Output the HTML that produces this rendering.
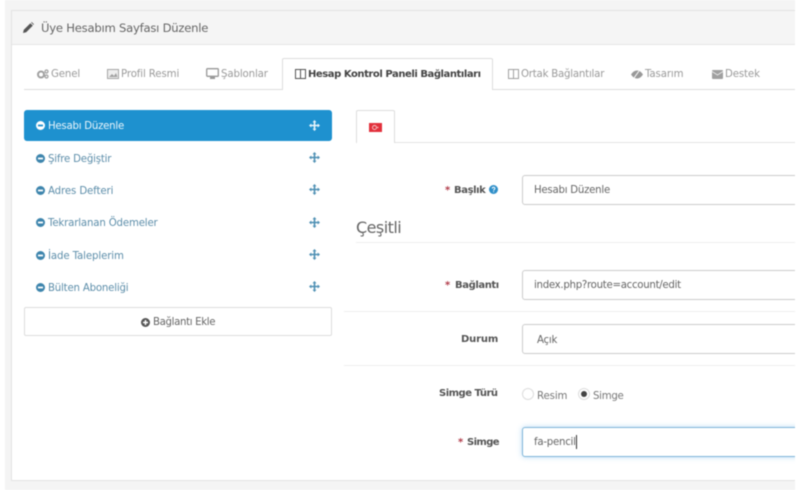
<!DOCTYPE html>
<html lang="tr"><head><meta charset="utf-8"><title>Üye Hesabım Sayfası Düzenle</title>
<style>
html,body{margin:0;padding:0;width:800px;height:490px;overflow:hidden;background:#fff}
#w{position:relative;width:800px;height:490px;overflow:hidden;background:#fff;font-family:"DejaVu Sans","Liberation Sans",sans-serif;filter:blur(.45px)}
#w div,#w span.t,#w svg{position:absolute}
.t{white-space:nowrap;line-height:16px;height:16px;font-size:10.2px;letter-spacing:-.12px}
.tab{color:#9a9a9a}
.l{color:#5d8eaa}
.b{font-weight:bold;color:#555;font-size:10px;letter-spacing:-.4px}
.r{color:#b03a48}
.in{left:522px;width:290px;height:28px;border:1px solid #ccc;border-radius:3px;background:#fff;box-sizing:content-box}
.v{color:#666;font-size:10.2px;letter-spacing:-.25px}
.hr{height:1px;background:#eee}
</style></head><body><div id="w">
<div style="left:5px;top:0;width:790px;height:490px;background:#f4f4f4"></div>
<div style="left:11px;top:10px;width:784px;height:469px;background:#fff;border:1px solid #e3e3e3;border-right:0;box-sizing:content-box"></div>
<div style="left:12px;top:11px;width:783px;height:33px;background:#f5f5f5;border-bottom:1px solid #e6e6e6"></div>
<svg style="left:23px;top:22px" width="11" height="11" viewBox="0 0 11 11"><path d="M0 11l.8-3.2L7.400 1.200 9.800 3.600 3.200 10.200zM8.100 .5l.6-.5 2.300 2.300-.6.6z" fill="#555"/></svg>
<span class="t" style="left:41px;top:20px;color:#666;font-size:11.6px;letter-spacing:-.23px">Üye Hesabım Sayfası Düzenle</span>

<div style="left:24px;top:89px;width:771px;height:1px;background:#ddd"></div>
<div style="left:282px;top:58px;width:211px;height:32px;background:#fff;border:1px solid #ddd;border-bottom:0;box-sizing:border-box;border-radius:2px 2px 0 0"></div>
<svg style="left:37px;top:69px" width="12" height="10" viewBox="0 0 12 10"><circle cx="4" cy="5.500" r="3" fill="none" stroke="#a0a0a0" stroke-width="2"/><circle cx="9.500" cy="2.500" r="1.500" fill="none" stroke="#a0a0a0" stroke-width="1.200"/><circle cx="9.500" cy="7.500" r="1.500" fill="none" stroke="#a0a0a0" stroke-width="1.200"/></svg>
<span class="t tab" style="left:51px;top:67px">Genel</span>
<svg style="left:107px;top:69px" width="12" height="10" viewBox="0 0 12 10"><rect x=".5" y=".5" width="11" height="9" fill="#eee" stroke="#a5a5a5"/><path d="M2 8l3-3 2 2 2-3 1.500 4z" fill="#a0a0a0"/></svg>
<span class="t tab" style="left:121px;top:67px">Profil Resmi</span>
<svg style="left:206px;top:68px" width="13" height="12" viewBox="0 0 13 12"><rect x=".7" y=".7" width="11.600" height="7.600" rx=".7" fill="#fff" stroke="#999" stroke-width="1.300"/><path d="M4 11h5V9H4z" fill="#999"/></svg>
<span class="t tab" style="left:221px;top:67px">Şablonlar</span>
<svg style="left:295px;top:69px" width="11" height="10" viewBox="0 0 11 10"><rect x=".5" y=".5" width="10" height="9" fill="none" stroke="#555"/><path d="M5.500 .5v9" stroke="#555"/></svg>
<span class="t" style="left:308px;top:67px;color:#444;font-weight:bold;font-size:10px;letter-spacing:-.44px">Hesap Kontrol Paneli Bağlantıları</span>
<svg style="left:508px;top:69px" width="11" height="10" viewBox="0 0 11 10"><rect x=".5" y=".5" width="10" height="9" fill="none" stroke="#a0a0a0"/><path d="M5.500 .5v9" stroke="#a0a0a0"/></svg>
<span class="t tab" style="left:521px;top:67px;letter-spacing:-.22px">Ortak Bağlantılar</span>
<svg style="left:631px;top:70px" width="12" height="9" viewBox="0 0 12 9"><path d="M0 4.500C2 1.500 4 .5 6 .5s4 1 6 4c-2 3-4 4-6 4s-4-1-6-4z" fill="#999"/><path d="M3 8L8 1" stroke="#fff"/></svg>
<span class="t tab" style="left:645px;top:67px">Tasarım</span>
<svg style="left:712px;top:70px" width="11" height="9" viewBox="0 0 11 9"><rect width="11" height="9" rx="1" fill="#a0a0a0"/><path d="M0 1.500l5.500 3.500L11 1.500" fill="none" stroke="#eee" stroke-width=".8"/></svg>
<span class="t tab" style="left:725px;top:67px">Destek</span>

<div style="left:24px;top:110px;width:308px;height:31px;background:#1e91cf;border-radius:3px"></div>
<svg style="left:36px;top:121px" width="9" height="9" viewBox="0 0 9 9"><circle cx="4.500" cy="4.500" r="4.500" fill="#fff"/><rect x="2" y="3.600" width="5" height="1.800" fill="#1e91cf"/></svg>
<span class="t" style="left:48px;top:119px;color:#eaf5fb;letter-spacing:-.25px">Hesabı Düzenle</span>
<svg style="left:309px;top:120px" width="11" height="11" viewBox="0 0 11 11"><path d="M5.500 0L7.500 2.300H6.300V4.700H8.700V3.500L11 5.500 8.700 7.500V6.300H6.300V8.700H7.500L5.500 11 3.500 8.700H4.700V6.300H2.300V7.500L0 5.500 2.300 3.500V4.700H4.700V2.300H3.500z" fill="#eaf5fb"/></svg>

<svg style="left:36px;top:154px" width="9" height="9" viewBox="0 0 9 9"><circle cx="4.500" cy="4.500" r="4.500" fill="#3e85ad"/><rect x="2" y="3.600" width="5" height="1.800" fill="#fff"/></svg>
<span class="t l" style="left:48px;top:152px;letter-spacing:-.2px">Şifre Değiştir</span>
<svg style="left:309px;top:152px" width="11" height="11" viewBox="0 0 11 11"><path d="M5.500 0L7.500 2.300H6.300V4.700H8.700V3.500L11 5.500 8.700 7.500V6.300H6.300V8.700H7.500L5.500 11 3.500 8.700H4.700V6.300H2.300V7.500L0 5.500 2.300 3.500V4.700H4.700V2.300H3.500z" fill="#4d8fb3"/></svg>

<svg style="left:36px;top:186px" width="9" height="9" viewBox="0 0 9 9"><circle cx="4.500" cy="4.500" r="4.500" fill="#3e85ad"/><rect x="2" y="3.600" width="5" height="1.800" fill="#fff"/></svg>
<span class="t l" style="left:48px;top:184px">Adres Defteri</span>
<svg style="left:309px;top:184px" width="11" height="11" viewBox="0 0 11 11"><path d="M5.500 0L7.500 2.300H6.300V4.700H8.700V3.500L11 5.500 8.700 7.500V6.300H6.300V8.700H7.500L5.500 11 3.500 8.700H4.700V6.300H2.300V7.500L0 5.500 2.300 3.500V4.700H4.700V2.300H3.500z" fill="#4d8fb3"/></svg>

<svg style="left:36px;top:218px" width="9" height="9" viewBox="0 0 9 9"><circle cx="4.500" cy="4.500" r="4.500" fill="#3e85ad"/><rect x="2" y="3.600" width="5" height="1.800" fill="#fff"/></svg>
<span class="t l" style="left:48px;top:216px;letter-spacing:-.17px">Tekrarlanan Ödemeler</span>
<svg style="left:309px;top:217px" width="11" height="11" viewBox="0 0 11 11"><path d="M5.500 0L7.500 2.300H6.300V4.700H8.700V3.500L11 5.500 8.700 7.500V6.300H6.300V8.700H7.500L5.500 11 3.500 8.700H4.700V6.300H2.300V7.500L0 5.500 2.300 3.500V4.700H4.700V2.300H3.500z" fill="#4d8fb3"/></svg>

<svg style="left:36px;top:251px" width="9" height="9" viewBox="0 0 9 9"><circle cx="4.500" cy="4.500" r="4.500" fill="#3e85ad"/><rect x="2" y="3.600" width="5" height="1.800" fill="#fff"/></svg>
<span class="t l" style="left:48px;top:249px">İade Taleplerim</span>
<svg style="left:309px;top:249px" width="11" height="11" viewBox="0 0 11 11"><path d="M5.500 0L7.500 2.300H6.300V4.700H8.700V3.500L11 5.500 8.700 7.500V6.300H6.300V8.700H7.500L5.500 11 3.500 8.700H4.700V6.300H2.300V7.500L0 5.500 2.300 3.500V4.700H4.700V2.300H3.500z" fill="#4d8fb3"/></svg>

<svg style="left:36px;top:283px" width="9" height="9" viewBox="0 0 9 9"><circle cx="4.500" cy="4.500" r="4.500" fill="#3e85ad"/><rect x="2" y="3.600" width="5" height="1.800" fill="#fff"/></svg>
<span class="t l" style="left:48px;top:281px;letter-spacing:-.2px">Bülten Aboneliği</span>
<svg style="left:309px;top:281px" width="11" height="11" viewBox="0 0 11 11"><path d="M5.500 0L7.500 2.300H6.300V4.700H8.700V3.500L11 5.500 8.700 7.500V6.300H6.300V8.700H7.500L5.500 11 3.500 8.700H4.700V6.300H2.300V7.500L0 5.500 2.300 3.500V4.700H4.700V2.300H3.500z" fill="#4d8fb3"/></svg>

<div style="left:24px;top:307px;width:308px;height:29px;border:1px solid #ddd;box-sizing:border-box;border-radius:2px"></div>
<svg style="left:141px;top:318px" width="9" height="9" viewBox="0 0 9 9"><circle cx="4.500" cy="4.500" r="4.500" fill="#555"/><path d="M2 4.500h5M4.500 2v5" stroke="#fff" stroke-width="1.500"/></svg>
<span class="t" style="left:153px;top:315px;color:#666;letter-spacing:-.35px">Bağlantı Ekle</span>

<div style="left:356px;top:142px;width:439px;height:1px;background:#e3e3e3"></div>
<div style="left:356px;top:110px;width:39px;height:33px;background:#fff;border:1px solid #ddd;border-bottom:0;box-sizing:border-box;border-radius:2px 2px 0 0"></div>
<svg style="left:369px;top:123px" width="13" height="9" viewBox="0 0 13 9"><rect width="13" height="9" fill="#e2303c"/><circle cx="5.500" cy="4.500" r="2" fill="none" stroke="#f5c8c8" stroke-width=".9"/><circle cx="8.800" cy="4.500" r=".7" fill="#f5c8c8"/></svg>

<span class="t r" style="left:445px;top:183px;font-weight:bold;font-size:10px">*</span>
<span class="t b" style="left:454px;top:183px">Başlık</span>
<svg style="left:489px;top:185px" width="9" height="9" viewBox="0 0 9 9"><circle cx="4.500" cy="4.500" r="4.500" fill="#2f8fc9"/><path d="M3.200 3.500c0-1.700 2.700-1.700 2.700 0 0 1-1.300 1-1.300 2" fill="none" stroke="#fff"/><rect x="4.100" y="6.200" width="1" height="1" fill="#fff"/></svg>
<div class="in" style="top:175px"></div>
<span class="t v" style="left:534px;top:183px">Hesabı Düzenle</span>

<span class="t" style="left:356px;top:217px;height:22px;line-height:22px;color:#666;font-size:16px;letter-spacing:-.55px">Çeşitli</span>
<div class="hr" style="left:356px;top:242px;width:439px"></div>

<span class="t r" style="left:445px;top:278px;font-weight:bold;font-size:10px">*</span>
<span class="t b" style="left:455px;top:278px">Bağlantı</span>
<div class="in" style="top:270px"></div>
<span class="t v" style="left:534px;top:278px;letter-spacing:-.29px">index.php?route=account/edit</span>
<div class="hr" style="left:344px;top:311px;width:451px"></div>

<span class="t b" style="left:461px;top:332px;letter-spacing:-.15px">Durum</span>
<div class="in" style="top:324px"></div>
<span class="t v" style="left:537px;top:333px">Açık</span>
<div class="hr" style="left:344px;top:365px;width:451px"></div>

<span class="t b" style="left:439px;top:386px;letter-spacing:-.5px">Simge Türü</span>
<div style="left:522px;top:388px;width:12px;height:12px;border:1px solid #ddd;border-radius:50%;box-sizing:border-box"></div>
<span class="t" style="left:537px;top:389px;color:#777">Resim</span>
<div style="left:578px;top:388px;width:12px;height:12px;border:1px solid #ddd;border-radius:50%;box-sizing:border-box"></div>
<div style="left:581px;top:391px;width:6px;height:6px;border-radius:50%;background:#444"></div>
<span class="t" style="left:593px;top:389px;color:#777;letter-spacing:-.3px">Simge</span>

<span class="t r" style="left:458px;top:435px;font-weight:bold;font-size:10px">*</span>
<span class="t b" style="left:467px;top:435px;letter-spacing:-.6px">Simge</span>
<div class="in" style="top:427px;border-color:#7fb5d8;box-shadow:0 0 6px rgba(102,175,233,.45)"></div>
<span class="t v" style="left:534px;top:435px">fa-pencil</span>
<div style="left:576px;top:435px;width:1px;height:14px;background:#333"></div>
<div style="left:795px;top:0;width:5px;height:490px;background:#fff"></div>
</div></body></html>
